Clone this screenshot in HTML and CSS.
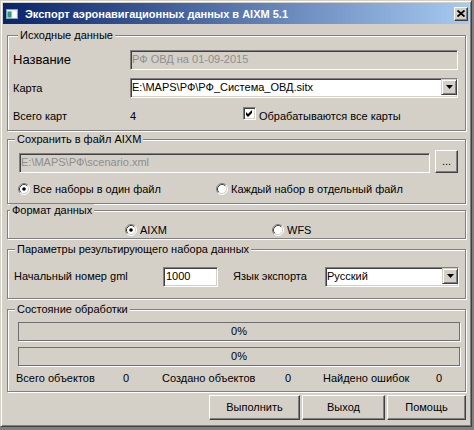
FILE: index.html
```html
<!DOCTYPE html>
<html lang="ru">
<head>
<meta charset="utf-8">
<title>Экспорт аэронавигационных данных в AIXM 5.1</title>
<link rel="stylesheet" href="styles.css">
</head>
<body>
<div class="window">
  <div class="titlebar">
    <svg class="app-icon" width="12" height="10" viewBox="0 0 12 10">
      <rect x="0" y="0" width="12" height="10" fill="#e6edf3"/>
      <rect x="0.5" y="0.5" width="11" height="9" fill="none" stroke="#8aa0b4"/>
      <rect x="1.5" y="2.5" width="4" height="6" fill="#2f9a7c"/>
      <rect x="6.5" y="2.5" width="4" height="6" fill="#ffffff"/>
    </svg>
    <span class="title">Экспорт аэронавигационных данных в AIXM 5.1</span>
    <div class="close raised">
      <svg width="8" height="7" viewBox="0 0 8 7">
        <path d="M0.5 0.5 L7.5 6.5 M7.5 0.5 L0.5 6.5" stroke="#000" stroke-width="1.8" fill="none"/>
      </svg>
    </div>
  </div>

  <div class="client">
    <section class="group g1">
      <div class="group-title">Исходные данные</div>
      <div class="row r20">
        <span class="lbl lbl-big">Название</span>
        <div class="field sunken disabled">РФ ОВД на 01-09-2015</div>
      </div>
      <div class="row r20">
        <span class="lbl">Карта</span>
        <div class="field sunken combo">
          <span class="combo-text">E:\MAPS\РФ\РФ_Система_ОВД.sitx</span>
          <span class="combo-btn raised">
            <svg width="7" height="4" viewBox="0 0 7 4"><polygon points="0,0 7,0 3.5,4" fill="#000"/></svg>
          </span>
        </div>
      </div>
      <div class="row r20 count-row">
        <span class="lbl">Всего карт</span>
        <span class="num">4</span>
        <span class="check sunken">
          <svg width="9" height="9" viewBox="0 0 9 9"><polygon points="1,3 3,5 7,1 7,4 3,8 1,6" fill="#000"/></svg>
        </span>
        <span class="check-text">Обрабатываются все карты</span>
      </div>
    </section>

    <section class="group g2">
      <div class="group-title">Сохранить в файл AIXM</div>
      <div class="row path-row">
        <div class="field sunken disabled path">E:\MAPS\РФ\scenario.xml</div>
        <div class="dots raised">...</div>
      </div>
      <div class="row radio-row">
        <span class="radio-item save-one">
          <svg class="radio" width="12" height="12" viewBox="0 0 12 12">
            <circle cx="6" cy="6" r="5" fill="#fff"/>
            <path d="M2.11 9.89 A5.5 5.5 0 0 1 9.89 2.11" stroke="#808080" fill="none"/>
            <path d="M9.89 2.11 A5.5 5.5 0 0 1 2.11 9.89" stroke="#fff" fill="none"/>
            <path d="M2.82 9.18 A4.5 4.5 0 0 1 9.18 2.82" stroke="#404040" fill="none"/>
            <path d="M9.18 2.82 A4.5 4.5 0 0 1 2.82 9.18" stroke="#d4d0c8" fill="none"/>
            <circle cx="6" cy="6" r="1.8" fill="#000"/>
          </svg>
          <span>Все наборы в один файл</span>
        </span>
        <span class="radio-item">
          <svg class="radio" width="12" height="12" viewBox="0 0 12 12">
            <circle cx="6" cy="6" r="5" fill="#fff"/>
            <path d="M2.11 9.89 A5.5 5.5 0 0 1 9.89 2.11" stroke="#808080" fill="none"/>
            <path d="M9.89 2.11 A5.5 5.5 0 0 1 2.11 9.89" stroke="#fff" fill="none"/>
            <path d="M2.82 9.18 A4.5 4.5 0 0 1 9.18 2.82" stroke="#404040" fill="none"/>
            <path d="M9.18 2.82 A4.5 4.5 0 0 1 2.82 9.18" stroke="#d4d0c8" fill="none"/>
          </svg>
          <span>Каждый набор в отдельный файл</span>
        </span>
      </div>
    </section>

    <section class="group g3">
      <div class="group-title">Формат данных</div>
      <div class="row radio-row format-row">
        <span class="radio-item fmt-aixm">
          <svg class="radio" width="12" height="12" viewBox="0 0 12 12">
            <circle cx="6" cy="6" r="5" fill="#fff"/>
            <path d="M2.11 9.89 A5.5 5.5 0 0 1 9.89 2.11" stroke="#808080" fill="none"/>
            <path d="M9.89 2.11 A5.5 5.5 0 0 1 2.11 9.89" stroke="#fff" fill="none"/>
            <path d="M2.82 9.18 A4.5 4.5 0 0 1 9.18 2.82" stroke="#404040" fill="none"/>
            <path d="M9.18 2.82 A4.5 4.5 0 0 1 2.82 9.18" stroke="#d4d0c8" fill="none"/>
            <circle cx="6" cy="6" r="1.8" fill="#000"/>
          </svg>
          <span>AIXM</span>
        </span>
        <span class="radio-item">
          <svg class="radio" width="12" height="12" viewBox="0 0 12 12">
            <circle cx="6" cy="6" r="5" fill="#fff"/>
            <path d="M2.11 9.89 A5.5 5.5 0 0 1 9.89 2.11" stroke="#808080" fill="none"/>
            <path d="M9.89 2.11 A5.5 5.5 0 0 1 2.11 9.89" stroke="#fff" fill="none"/>
            <path d="M2.82 9.18 A4.5 4.5 0 0 1 9.18 2.82" stroke="#404040" fill="none"/>
            <path d="M9.18 2.82 A4.5 4.5 0 0 1 2.82 9.18" stroke="#d4d0c8" fill="none"/>
          </svg>
          <span>WFS</span>
        </span>
      </div>
    </section>

    <section class="group g4">
      <div class="group-title">Параметры результирующего набора данных</div>
      <div class="row params-row">
        <span class="lbl gml-lbl">Начальный номер gml</span>
        <div class="field sunken gml">1000</div>
        <span class="lang-lbl">Язык экспорта</span>
        <div class="field sunken combo">
          <span class="combo-text">Русский</span>
          <span class="combo-btn raised">
            <svg width="7" height="4" viewBox="0 0 7 4"><polygon points="0,0 7,0 3.5,4" fill="#000"/></svg>
          </span>
        </div>
      </div>
    </section>

    <section class="group g5">
      <div class="group-title">Состояние обработки</div>
      <div class="progress">0%</div>
      <div class="progress">0%</div>
      <div class="stats">
        <span>Всего объектов</span><span>0</span>
        <span>Создано объектов</span><span>0</span>
        <span>Найдено ошибок</span><span>0</span>
      </div>
    </section>

    <div class="buttons">
      <div class="btn raised btn-run">Выполнить</div>
      <div class="btn raised btn-exit">Выход</div>
      <div class="btn raised btn-help">Помощь</div>
    </div>
  </div>
</div>
</body>
</html>
```

FILE: styles.css
```css
* { box-sizing: border-box; }
html, body { margin: 0; padding: 0; }
body {
  width: 474px;
  height: 430px;
  overflow: hidden;
  background: #808080;
  font-family: "Liberation Sans", Arial, sans-serif;
  font-size: 11px;
  color: #000;
}

.window {
  width: 472px;
  height: 427px;
  background: #d4d0c8;
  border: 1px solid;
  border-color: #d4d0c8 #404040 #404040 #d4d0c8;
  box-shadow: inset 1px 1px 0 #fff, inset -1px -1px 0 #808080;
  padding: 2px;
  display: flex;
  flex-direction: column;
}

/* ---------- title bar ---------- */
.titlebar {
  height: 21px;
  flex: none;
  display: flex;
  align-items: center;
  padding-left: 3px;
  background: linear-gradient(to right, #0a246a, #a6caf0);
}
.app-icon { flex: none; display: block; }
.title {
  margin-left: 7px;
  color: #fff;
  font-weight: bold;
  font-size: 11px;
  white-space: nowrap;
}
.close {
  margin-left: auto;
  margin-right: 1px;
  width: 14px;
  height: 14px;
  display: flex;
  align-items: center;
  justify-content: center;
  background: #d4d0c8;
}
.close svg { display: block; }

/* ---------- 3D borders ---------- */
.raised {
  border: 1px solid;
  border-color: #fff #404040 #404040 #fff;
  box-shadow: inset -1px -1px 0 #808080;
  background: #d4d0c8;
}
.sunken {
  border: 1px solid;
  border-color: #808080 #fff #fff #808080;
  box-shadow: inset 1px 1px 0 #404040, inset -1px -1px 0 #d4d0c8;
}

/* ---------- client ---------- */
.client {
  flex: 1;
  display: flex;
  flex-direction: column;
  padding: 11px 3px 0 4px;
}

.group {
  border: 1px solid #808080;
  box-shadow: inset 1px 1px 0 #fff, 1px 1px 0 #fff;
  display: flex;
  flex-direction: column;
}
.group-title {
  align-self: flex-start;
  margin-top: -7px;
  line-height: 13px;
  padding: 0 2px;
  background: #d4d0c8;
  white-space: nowrap;
}

.row { display: flex; align-items: center; }
.r20 { height: 20px; margin-top: 8px; line-height: 20px; }

.lbl { flex: none; white-space: nowrap; }
.lbl-big { font-size: 13px; }

.field {
  height: 20px;
  line-height: 16px;
  padding: 0 1px;
  white-space: nowrap;
  overflow: hidden;
  background: #fff;
}
.disabled { background: #d4d0c8; color: #8e8e8e; }

.combo { display: flex; align-items: stretch; padding: 0 0 0 1px; }
.combo-text { flex: 1; overflow: hidden; }
.combo-btn {
  flex: none;
  width: 16px;
  height: 16px;
  display: flex;
  align-items: center;
  justify-content: center;
  border-color: #d4d0c8 #404040 #404040 #d4d0c8;
  box-shadow: inset 1px 1px 0 #fff, inset -1px -1px 0 #808080;
}
.combo-btn svg { display: block; }

/* group 1 */
.g1 { padding: 0 7px 4px 5px; }
.g1 .group-title { margin-left: 5px; }
.g1 .lbl { width: 117px; }
.g1 .field { flex: 1; }
.num { flex: none; width: 113px; }
.check {
  flex: none;
  align-self: flex-start;
  margin-top: 1px;
  width: 13px;
  height: 13px;
  background: #fff;
  display: flex;
  align-items: center;
  justify-content: center;
}
.check svg { display: block; }
.check-text { margin-left: 3px; white-space: nowrap; }

/* group 2 */
.g2 { margin-top: 8px; padding: 0 7px 7px 11px; }
.g2 .group-title { margin-left: -4px; }
.path-row { height: 23px; margin-top: 4px; align-items: flex-end; }
.path { flex: 1; margin-right: 5px; }
.dots {
  flex: none;
  width: 23px;
  height: 23px;
  text-align: center;
  line-height: 21px;
  font-size: 11px;
}

.radio-row { height: 14px; margin-top: 9px; line-height: 14px; }
.radio-item { display: flex; align-items: center; white-space: nowrap; }
.radio { flex: none; display: block; margin-right: 3px; }
.save-one { width: 198px; margin-left: -1px; }

/* group 3 */
.g3 { margin-top: 6px; padding: 0 0 1px 0; }
.g3 .group-title { margin-left: 2px; }
.format-row { margin-top: 6px; padding-left: 117px; }
.fmt-aixm { width: 147px; }

/* group 4 */
.g4 { margin-top: 10px; padding: 0 6px 11px 6px; }
.g4 .group-title { margin-left: 1px; }
.params-row { height: 21px; margin-top: 10px; line-height: 21px; }
.gml-lbl { width: 149px; }
.gml { flex: none; width: 55px; padding-left: 2px; }
.lang-lbl { flex: none; width: 92px; margin-left: 15px; white-space: nowrap; }
.g4 .combo { flex: 1; }

/* group 5 */
.g5 { margin-top: 10px; padding: 0 5px 7px 10px; }
.g5 .group-title { margin-left: -3px; }
.progress {
  height: 19px;
  margin-top: 6px;
  line-height: 17px;
  text-align: center;
  background: #d4d0c8;
  border: 1px solid #6f6f6f;
  box-shadow: 1px 1px 0 #fff;
}
.stats {
  display: grid;
  grid-template-columns: 107px 39px 123px 38px 113px auto;
  height: 12px;
  line-height: 12px;
  margin-top: 6px;
  margin-left: -2px;
  white-space: nowrap;
}

/* buttons */
.buttons {
  display: flex;
  justify-content: flex-end;
  gap: 2px;
  margin-top: 3px;
}
.btn {
  height: 25px;
  line-height: 23px;
  text-align: center;
}
.btn-run { width: 91px; }
.btn-exit { width: 83px; }
.btn-help { width: 79px; }
```
